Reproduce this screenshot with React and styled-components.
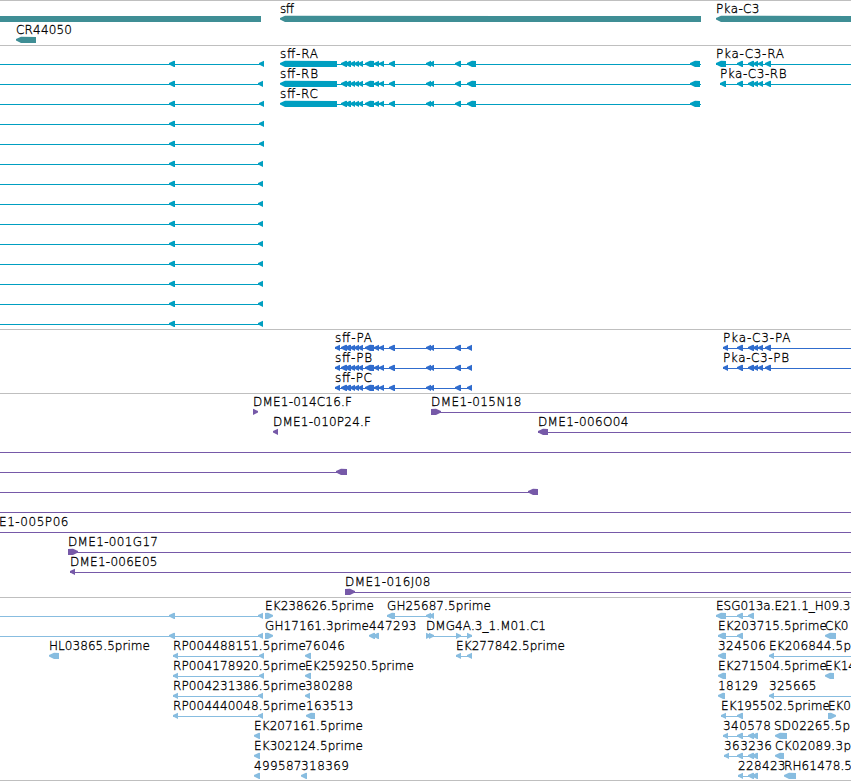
import React from "react"
import styled, { createGlobalStyle } from "styled-components"

const GlobalStyle = createGlobalStyle`
  body {
    margin: 0;
    background: #fff;
  }
`

const WIDTH = 851

const Browser = styled.main`
  display: flex;
  flex-direction: column;
  width: ${WIDTH}px;
  height: 781px;
  overflow: hidden;
  box-sizing: border-box;
  border-bottom: 1px solid #bfbfbf;
`

const Track = styled.section`
  display: flex;
  flex-direction: column;
  flex-shrink: 0;
  border-top: 1px solid #bfbfbf;
  padding: 2px 0 ${props => props.$bottom}px;
  color: ${props => props.$color};
`

const Row = styled.svg`
  display: block;
  flex-shrink: 0;
  width: ${WIDTH}px;
  height: ${props => props.$height}px;
  fill: currentColor;
`

const Label = styled.text`
  fill: #000;
  stroke: #000;
  stroke-width: 0.3px;
  font-family: "DejaVu Sans", sans-serif;
  font-size: 12px;
  font-weight: 200;
`

// features: labels [x, text, width], lines [from, to],
// left / right are exons [from, to] pointing that way, boxes have no head
const label = (x, text, width) => ({ kind: "label", x, text, width })
const line = (x, end = WIDTH) => ({ kind: "line", x, end })
const left = (x, end) => ({ kind: "left", x, end })
const right = (x, end) => ({ kind: "right", x, end })
const box = (x, end) => ({ kind: "box", x, end })
const lefts = pairs => pairs.map(([x, end]) => left(x, end))

const genes = [
  [box(0, 261), label(280, "sff", 14), left(280, 701), label(716, "Pka-C3", 43.5), left(716, 860)],
  [label(16, "CR44050", 56), left(16, 36)],
]

const upstream = end => [line(0, end), left(169, 175), left(end - 5, end)]

const sffExons = lefts([
  [341, 347], [345, 351], [350, 355], [354, 359], [358, 363], [365, 374],
  [374, 379], [379, 384], [389, 395], [426, 431], [429, 434], [455, 461],
])

const sffTranscript = name => [
  label(280, name, 38), line(337, 701), left(280, 337), ...sffExons, left(467, 476), left(690, 700),
]

const pkaExons = lefts([[737, 743], [748, 754], [753, 758], [758, 763], [765, 771]])

const transcripts = [
  [...upstream(264), ...sffTranscript("sff-RA"), label(716, "Pka-C3-RA", 68), line(716), left(716, 726), ...pkaExons],
  [...upstream(263), ...sffTranscript("sff-RB"), label(720, "Pka-C3-RB", 66.5), line(720), left(720, 726), ...pkaExons],
  [...upstream(264), ...sffTranscript("sff-RC")],
  upstream(264),
  upstream(264),
  ...Array.from({ length: 9 }, () => upstream(263)),
]

const sffProtein = name => [
  label(335, name, 37), line(335, 472), left(335, 340), ...sffExons, left(467, 472),
]

const proteins = [
  [...sffProtein("sff-PA"), label(723, "Pka-C3-PA", 67.5), line(723), left(723, 728), ...pkaExons],
  [...sffProtein("sff-PB"), label(723, "Pka-C3-PB", 66), line(723), left(723, 728), ...pkaExons],
  sffProtein("sff-PC"),
]

const bacs = [
  [label(253, "DME1-014C16.F", 99), right(253, 258), label(431, "DME1-015N18", 90.5), line(431), right(431, 441)],
  [label(273, "DME1-010P24.F", 98), left(273, 278), label(538, "DME1-006O04", 90.5), line(538), left(538, 548)],
  [line(0)],
  [line(0, 347), left(336, 347)],
  [line(0, 538), left(528, 538)],
  [line(0)],
  [label(-1, "E1-005P06", 69.5), line(0)],
  [label(68, "DME1-001G17", 90), line(68), right(68, 78)],
  [label(70, "DME1-006E05", 87.5), line(70), left(70, 75)],
  [label(345, "DME1-016J08", 85.5), line(345), right(345, 355)],
]

const rpClone = (name, end) => [
  label(173, name, 133), line(173, end), left(173, 178), left(end - 5, end),
]

const ests = [
  [
    ...upstream(263), label(265, "EK238626.5prime", 109), right(265, 273),
    label(387, "GH25687.5prime", 104), line(387, 434), left(387, 395), left(426, 431), left(429, 434),
    label(716, "ESG013a.E21.1_H09.3", 134.5), line(716, 754), left(716, 726), left(737, 743), left(748, 754),
  ],
  [
    ...upstream(263), label(265, "GH17161.3prime", 104), right(265, 273),
    label(369, "447293", 47.5), left(369, 375), left(373, 379),
    label(426, "DMG4A.3_1.M01.C1", 120), line(426, 472), right(426, 431), right(429, 434), right(456, 461), right(467, 472),
    label(718, "EK203715.5prime", 109), line(718, 743), left(718, 726), left(737, 743),
    label(825, "CK0", 23.5), left(825, 836),
  ],
  [
    label(49, "HL03865.5prime", 101), left(49, 59), ...rpClone("RP004488151.5prime", 264),
    label(305, "76046", 40), left(305, 311),
    label(456, "EK277842.5prime", 109), line(456, 472), left(456, 461), left(467, 472),
    label(718, "324506", 48), left(718, 726), label(769, "EK206844.5p", 82), line(769), left(769, 774),
  ],
  [
    ...rpClone("RP004178920.5prime", 264), label(305, "EK259250.5prime", 109), left(305, 311),
    label(718, "EK271504.5prime", 109), left(718, 726), label(825, "EK14", 31), left(825, 834),
  ],
  [
    ...rpClone("RP004231386.5prime", 263), label(305, "380288", 48), left(305, 310),
    label(718, "18129", 40), left(718, 725), label(769, "325665", 47.5), line(769), left(769, 774),
  ],
  [
    ...rpClone("RP004440048.5prime", 263), label(306, "163513", 47.5), left(306, 315),
    label(721, "EK195502.5prime", 109), line(721, 743), left(721, 726), left(737, 743),
    label(828, "EK0", 23), right(828, 836),
  ],
  [
    label(254, "EK207161.5prime", 109), left(254, 260),
    label(723, "340578", 48), line(723, 758), ...lefts([[723, 728], [737, 743], [748, 754], [752, 758]]),
    label(774, "SD02265.5p", 76), left(775, 787),
  ],
  [
    label(254, "EK302124.5prime", 109), left(254, 260),
    label(724, "363236", 48), line(724, 758), ...lefts([[724, 729], [737, 743], [748, 754], [752, 758]]),
    label(775, "CK02089.3p", 76), left(775, 784),
  ],
  [
    label(254, "499587", 47.5), left(254, 260), label(301, "318369", 48), left(301, 307),
    label(738, "228423", 47.5), line(738, 758), ...lefts([[738, 743], [748, 754], [752, 758]]),
    label(784, "RH61478.5", 68), left(784, 796),
  ],
]

const tracks = [
  { name: "genes", color: "#3f8e95", rows: genes, rowHeight: 21, bottom: 0 },
  { name: "transcripts", color: "#009fc1", rows: transcripts, rowHeight: 20, bottom: 1 },
  { name: "proteins", color: "#306ccd", rows: proteins, rowHeight: 20, bottom: 1 },
  { name: "bacs", color: "#7659a8", rows: bacs, rowHeight: 20, bottom: 1 },
  { name: "ests", color: "#88bde0", rows: ests, rowHeight: 20, bottom: 0 },
]

function Feature({ kind, x, end, text, width }) {
  const head = Math.min(5, end - x)

  switch (kind) {
    case "label":
      return <Label x={x} y={10} textLength={width}>{text}</Label>
    case "line":
      return <rect x={x} y={16} width={end - x} height={1} />
    case "left":
      return <polygon points={`${x},15 ${x + head},12.8 ${end},13 ${end},19 ${x + head},19 ${x},16.6`} />
    case "right":
      return <polygon points={`${end},15 ${end - head},12.8 ${x},13 ${x},19 ${end - head},19 ${end},16.6`} />
    default:
      return <rect x={x} y={13} width={end - x} height={6} />
  }
}

export default function App() {
  return (
    <>
      <GlobalStyle />
      <Browser>
        {tracks.map(track => (
          <Track key={track.name} $color={track.color} $bottom={track.bottom}>
            {track.rows.map((features, i) => (
              <Row key={i} $height={track.rowHeight}>
                {features.map((feature, j) => (
                  <Feature key={j} {...feature} />
                ))}
              </Row>
            ))}
          </Track>
        ))}
      </Browser>
    </>
  )
}
